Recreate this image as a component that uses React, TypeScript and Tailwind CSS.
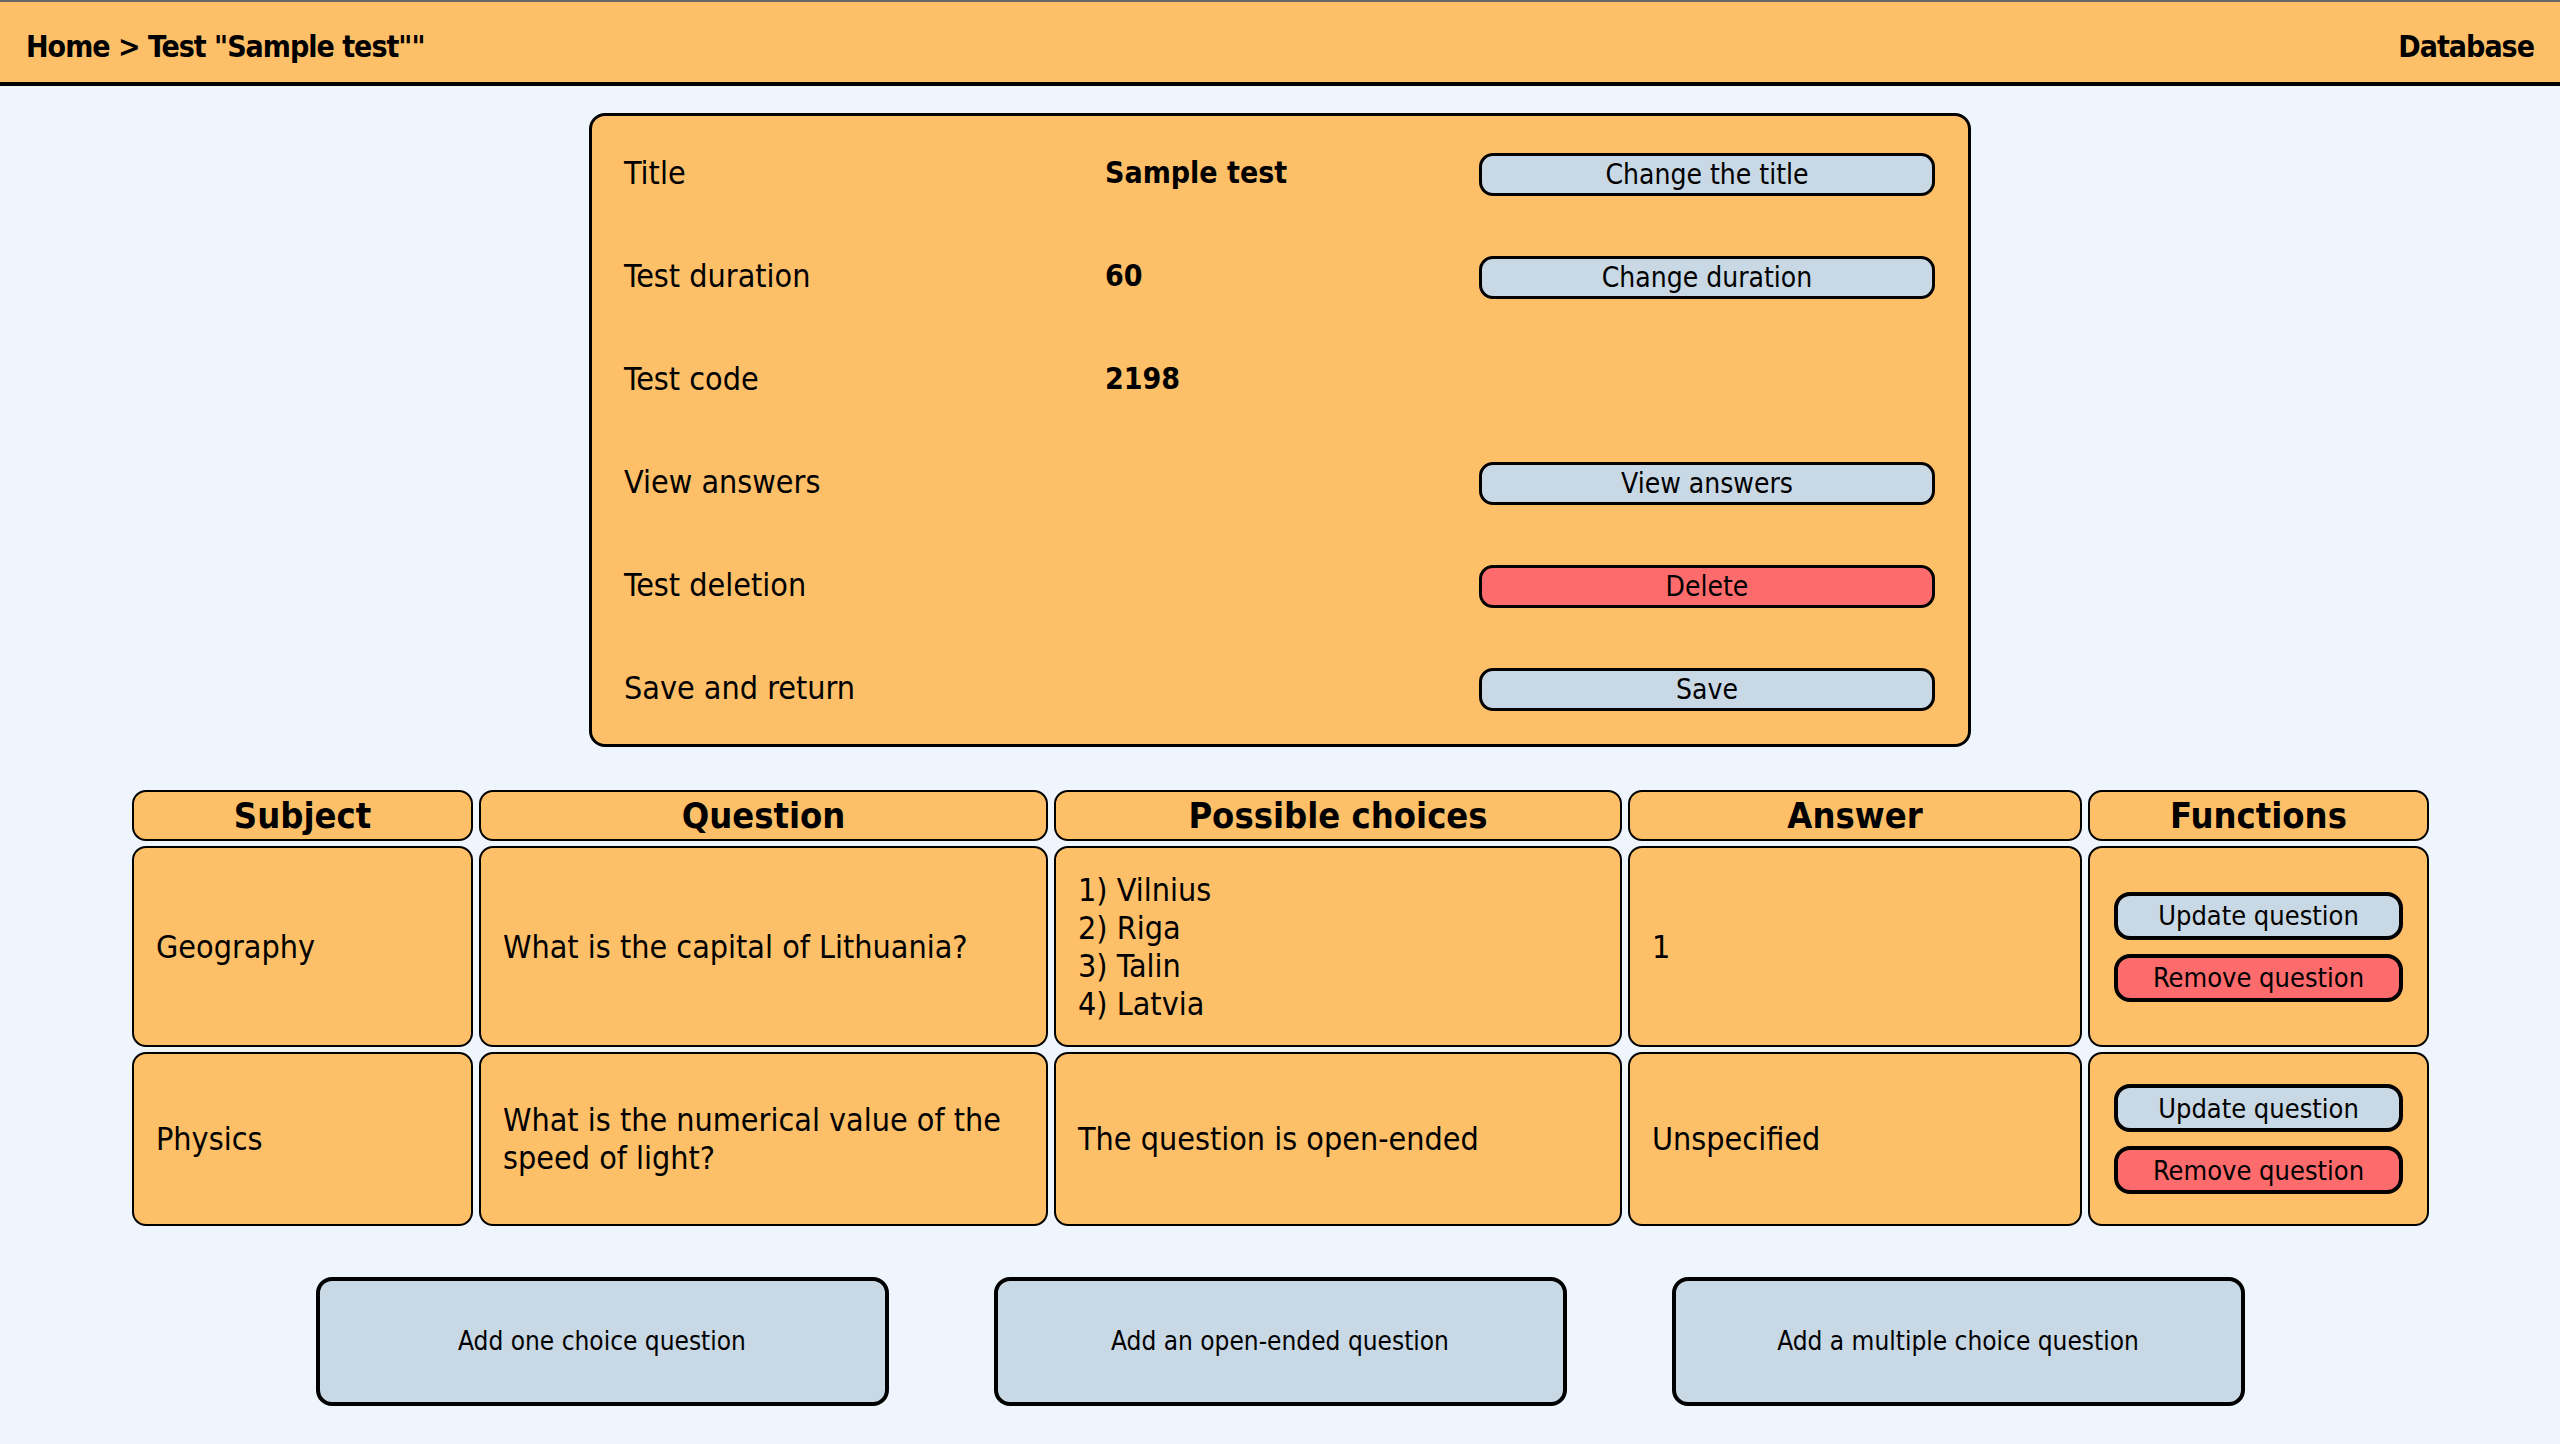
import React from "react";

const font = { fontFamily: '"DejaVu Sans", Tahoma, Verdana, sans-serif' };

function PanelButton({ label, red }: { label: string; red?: boolean }) {
  return (
    <button
      className={
        "h-[43px] w-full rounded-[14px] border-[3px] border-black text-[28px] leading-none font-stretch-condensed text-black " +
        (red ? "bg-[#fe6b6d]" : "bg-[#c8d8e4]")
      }
    >
      {label}
    </button>
  );
}

function FnButton({ label, red }: { label: string; red?: boolean }) {
  return (
    <button
      className={
        "h-[48px] w-[289px] rounded-[16px] border-[4px] border-black text-[27px] leading-none text-black " +
        (red ? "bg-[#fe6b6d]" : "bg-[#c8d8e4]")
      }
    >
      {label}
    </button>
  );
}

const rows: { label: string; value?: string; button?: string; red?: boolean }[] = [
  { label: "Title", value: "Sample test", button: "Change the title" },
  { label: "Test duration", value: "60", button: "Change duration" },
  { label: "Test code", value: "2198" },
  { label: "View answers", button: "View answers" },
  { label: "Test deletion", button: "Delete", red: true },
  { label: "Save and return", button: "Save" },
];

const cell =
  "rounded-[14px] border-[2.5px] border-black bg-[#fdbf67] flex items-center px-[22px] text-[32px] leading-[38px] text-black font-stretch-condensed";
const head =
  "h-[51px] rounded-[14px] border-[2.5px] border-black bg-[#fdbf67] flex items-center justify-center text-[36px] font-bold text-black font-stretch-condensed";

export default function App() {
  return (
    <div className="min-h-[1444px] w-full bg-[#eef5fc]" style={font}>
      <div className="border-t-[2px] border-[#666666]">
        <div className="flex h-[84px] items-center justify-between border-b-[4px] border-black bg-[#fdbf67] px-[26px] pt-[8px] text-[30px] font-bold tracking-[-1px] text-black font-stretch-condensed">
          <span>Home &gt; Test "Sample test""</span>
          <span>Database</span>
        </div>
      </div>

      <div className="mt-[27px] flex justify-center">
        <div className="w-[1382px] rounded-[16px] border-[3px] border-black bg-[#fdbf67] px-[32px] pt-[5px] pb-[5px]">
          {rows.map((r) => (
            <div
              key={r.label}
              className="grid h-[103px] grid-cols-[481px_374px_456px] items-center text-[32px] text-black font-stretch-condensed"
            >
              <span>{r.label}</span>
              <span className="text-[30px] font-bold">{r.value ?? ""}</span>
              <div>{r.button ? <PanelButton label={r.button} red={r.red} /> : null}</div>
            </div>
          ))}
        </div>
      </div>

      <div className="mt-[43px] flex justify-center">
        <div className="grid w-[2296px] grid-cols-[341px_569px_568px_454px_341px] gap-x-[6px] gap-y-[5px]">
          <div className={head}>Subject</div>
          <div className={head}>Question</div>
          <div className={head}>Possible choices</div>
          <div className={head}>Answer</div>
          <div className={head}>Functions</div>

          <div className={cell + " h-[201px]"}>Geography</div>
          <div className={cell}>What is the capital of Lithuania?</div>
          <div className={cell}>
            <div>
              <div>1) Vilnius</div>
              <div>2) Riga</div>
              <div>3) Talin</div>
              <div>4) Latvia</div>
            </div>
          </div>
          <div className={cell}>1</div>
          <div className={cell + " flex-col justify-center gap-[14px]"}>
            <FnButton label="Update question" />
            <FnButton label="Remove question" red />
          </div>

          <div className={cell + " h-[174px]"}>Physics</div>
          <div className={cell}>What is the numerical value of the speed of light?</div>
          <div className={cell}>The question is open-ended</div>
          <div className={cell}>Unspecified</div>
          <div className={cell + " flex-col justify-center gap-[14px]"}>
            <FnButton label="Update question" />
            <FnButton label="Remove question" red />
          </div>
        </div>
      </div>

      <div className="mt-[51px] flex justify-center gap-[105px]">
        {["Add one choice question", "Add an open-ended question", "Add a multiple choice question"].map((t) => (
          <button
            key={t}
            className="h-[129px] w-[573px] rounded-[16px] border-[4px] border-black bg-[#c8d8e4] text-[26px] text-black font-stretch-condensed"
          >
            {t}
          </button>
        ))}
      </div>
    </div>
  );
}
